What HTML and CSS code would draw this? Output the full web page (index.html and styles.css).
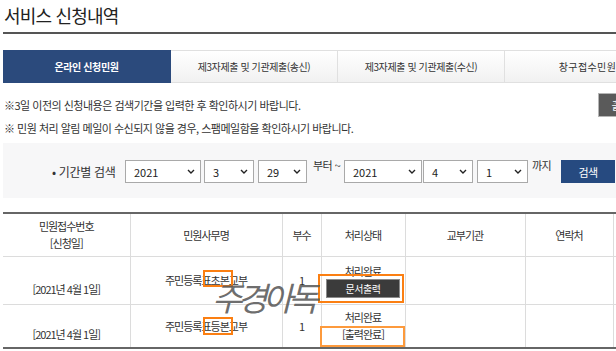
FILE: index.html
```html
<!DOCTYPE html>
<html lang="ko">
<head>
    <meta charset="UTF-8">
    <title>서비스 신청내역</title>
    <link rel="stylesheet" href="styles.css">
</head>
<body>
<div class="page">

    <h2 class="title">서비스 신청내역</h2>

    <ul class="tabs">
        <li class="tab active">온라인 신청민원</li>
        <li class="tab">제3자제출 및 기관제출(송신)</li>
        <li class="tab">제3자제출 및 기관제출(수신)</li>
        <li class="tab wide">창구접수민원</li>
    </ul>

    <div class="notice">
        <button class="print-all">출력</button>
        <p>※3일 이전의 신청내용은 검색기간을 입력한 후 확인하시기 바랍니다.</p>
        <p>※ 민원 처리 알림 메일이 수신되지 않을 경우, 스팸메일함을 확인하시기 바랍니다.</p>
    </div>

    <div class="search">
        <span class="search-label">• 기간별 검색</span>
        <div class="select w76 gap3"><span>2021</span><svg width="8" height="5" viewBox="0 0 8 5"><path d="M1 1l3 3 3-3" fill="none" stroke="#222" stroke-width="1.4"/></svg></div>
        <div class="select w50 gap4"><span>3</span><svg width="8" height="5" viewBox="0 0 8 5"><path d="M1 1l3 3 3-3" fill="none" stroke="#222" stroke-width="1.4"/></svg></div>
        <div class="select w49"><span>29</span><svg width="8" height="5" viewBox="0 0 8 5"><path d="M1 1l3 3 3-3" fill="none" stroke="#222" stroke-width="1.4"/></svg></div>
        <span class="search-text from">부터 ~</span>
        <div class="select w78 gap1"><span>2021</span><svg width="8" height="5" viewBox="0 0 8 5"><path d="M1 1l3 3 3-3" fill="none" stroke="#222" stroke-width="1.4"/></svg></div>
        <div class="select w50 gap4"><span>4</span><svg width="8" height="5" viewBox="0 0 8 5"><path d="M1 1l3 3 3-3" fill="none" stroke="#222" stroke-width="1.4"/></svg></div>
        <div class="select w51"><span>1</span><svg width="8" height="5" viewBox="0 0 8 5"><path d="M1 1l3 3 3-3" fill="none" stroke="#222" stroke-width="1.4"/></svg></div>
        <span class="search-text to">까지</span>
        <button class="search-btn">검색</button>
    </div>

    <div class="table-wrap">
        <table class="list">
            <colgroup>
                <col style="width:127px">
                <col style="width:152px">
                <col style="width:39px">
                <col style="width:84px">
                <col style="width:120px">
                <col style="width:88px">
                <col style="width:40px">
            </colgroup>
            <thead>
                <tr>
                    <th>민원접수번호<br>[신청일]</th>
                    <th>민원사무명</th>
                    <th>부수</th>
                    <th>처리상태</th>
                    <th>교부기관</th>
                    <th>연락처</th>
                    <th></th>
                </tr>
            </thead>
            <tbody>
                <tr class="row-first">
                    <td>&nbsp;<br>[2021년 4월 1일]</td>
                    <td>주민등록표초본교부</td>
                    <td>1</td>
                    <td>처리완료<br><button class="doc-btn">문서출력</button></td>
                    <td></td>
                    <td></td>
                    <td></td>
                </tr>
                <tr class="row-second">
                    <td>&nbsp;<br>[2021년 4월 1일]</td>
                    <td>주민등록표등본교부</td>
                    <td>1</td>
                    <td>처리완료<br>[출력완료]</td>
                    <td></td>
                    <td></td>
                    <td></td>
                </tr>
            </tbody>
        </table>

        <!-- annotation marks drawn over the table -->
        <div class="mark mark-1"></div>
        <div class="mark mark-2"></div>
        <div class="mark mark-3"></div>
        <div class="mark mark-4"></div>
        <div class="watermark">주경아독</div>
    </div>

</div>
</body>
</html>
```

FILE: styles.css
```css
body {
    margin: 0;
    overflow: hidden;
    background: #fff;
    color: #333;
    font-family: "Noto Sans CJK KR", "Noto Sans", sans-serif;
    font-size: 11px;
    letter-spacing: -0.5px;
}
.page {
    width: 700px;
    padding-left: 3px;
}

/* title */
.title {
    width: 612px;
    height: 32px;
    margin: 0;
    border-bottom: 2px solid #555;
    font-size: 18px;
    font-weight: normal;
    line-height: 30px;
    letter-spacing: -0.8px;
    color: #222;
    padding-left: 1px;
    box-sizing: content-box;
}

/* tabs */
.tabs {
    display: flex;
    margin: 16px 0 0;
    padding: 0;
    list-style: none;
}
.tab {
    flex-shrink: 0;
    width: 167px;
    height: 33px;
    box-sizing: border-box;
    border: 1px solid #e0e0e0;
    border-left: none;
    background: linear-gradient(#ffffff, #f1f1f1);
    text-align: center;
    line-height: 31px;
    font-size: 10px;
    letter-spacing: -0.4px;
    color: #333;
}
.tab:first-child {
    width: 168px;
}
.tab.active {
    background: #2b4a7c;
    border-color: #2b4a7c;
    color: #fff;
    font-weight: bold;
}
.tab.wide {
    width: 166px;
    letter-spacing: 0.4px;
}

/* notice */
.notice {
    width: 640px;
    height: 60px;
    padding-top: 10px;
    box-sizing: border-box;
}
.notice p {
    margin: 3px 0 5px 1px;
    line-height: 18px;
    color: #333;
}
.print-all {
    float: right;
    width: 45px;
    height: 24px;
    padding: 0;
    border: 1px solid #b5b5b5;
    background: #5a5a5a;
    color: #fff;
    font-family: inherit;
    font-size: 11px;
    letter-spacing: -1px;
}

/* search box */
.search {
    display: flex;
    align-items: flex-start;
    height: 55px;
    box-sizing: border-box;
    padding: 17px 0 0 49px;
    background: #f7f7f8;
}
.search-label {
    width: 73px;
    line-height: 23px;
    font-size: 12px;
    letter-spacing: -0.3px;
    color: #333;
}
.select {
    display: flex;
    align-items: center;
    justify-content: space-between;
    height: 23px;
    box-sizing: border-box;
    padding: 0 5px 0 8px;
    border: 1px solid #a9a9a9;
    background: #fff;
    color: #222;
    letter-spacing: 0;
}
.w76 { width: 76px; }
.w78 { width: 78px; }
.w50 { width: 50px; }
.w49 { width: 49px; }
.w51 { width: 51px; }
.gap1 { margin-right: 1px; }
.gap3 { margin-right: 3px; }
.gap4 { margin-right: 4px; }
.search-text {
    line-height: 16px;
    margin-top: -3px;
    font-size: 11px;
    color: #333;
}
.search-text.from {
    width: 31px;
    padding-left: 6px;
}
.search-text.to {
    width: 29px;
    padding-left: 4px;
}
.search-btn {
    width: 54px;
    height: 23px;
    padding: 0;
    border: none;
    background: #264a80;
    color: #fff;
    font-family: inherit;
    font-size: 11px;
    letter-spacing: -0.5px;
}

/* result table */
.table-wrap {
    position: relative;
    margin-top: 14px;
}
.list {
    width: 650px;
    table-layout: fixed;
    border-collapse: collapse;
    border-top: 2px solid #666;
    border-bottom: 2px solid #666;
}
.list th,
.list td {
    padding: 0;
    border-right: 1px solid #dcdcdc;
    border-bottom: 1px solid #dcdcdc;
    text-align: center;
    vertical-align: middle;
    font-weight: normal;
    line-height: 17px;
    letter-spacing: -1px;
    color: #333;
}
.list th {
    height: 42px;
}
.row-first td {
    height: 47px;
}
.row-second td {
    height: 42px;
    border-bottom: none;
}
.doc-btn {
    width: 74px;
    height: 19px;
    margin-top: -1px;
    padding: 0;
    border: 1px solid #8a8a8a;
    background: #3b3b3b;
    color: #fff;
    font-family: inherit;
    font-size: 10px;
    letter-spacing: -0.5px;
    vertical-align: top;
}

/* overlays */
.mark {
    position: absolute;
    box-sizing: border-box;
    border: 2px solid #fb7f12;
}
.mark-1 { left: 200px; top: 58px; width: 30px; height: 17px; }
.mark-2 { left: 200px; top: 105px; width: 30px; height: 18px; }
.mark-3 { left: 315px; top: 62px; width: 86px; height: 29px; }
.mark-4 { left: 317px; top: 114px; width: 85px; height: 21px; border-color: #fd9a3c; }
.watermark {
    position: absolute;
    left: 209px;
    top: 69px;
    font-size: 33px;
    line-height: 33px;
    font-style: italic;
    letter-spacing: -5px;
    color: rgba(90, 90, 90, 0.88);
}
```
